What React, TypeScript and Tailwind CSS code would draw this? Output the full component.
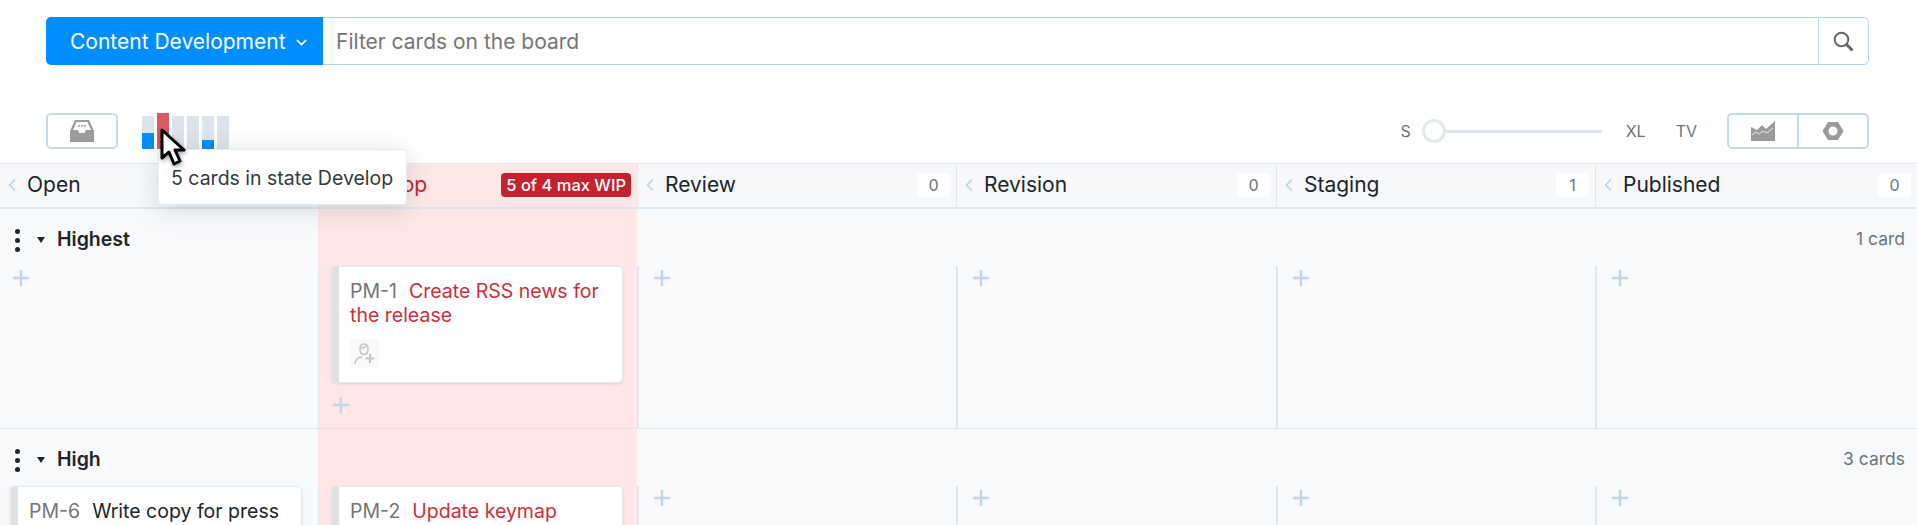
import type { ReactNode } from 'react';
import { ChevronDown, ChevronLeft, Plus } from 'lucide-react';

const columns = [
  { name: 'Open' },
  { name: 'Develop', wip: '5 of 4 max WIP' },
  { name: 'Review', count: 0 },
  { name: 'Revision', count: 0 },
  { name: 'Staging', count: 1 },
  { name: 'Published', count: 0 },
];

const bars = [
  { h: 'h-[33px]', fill: 'h-[16px]' },
  { h: 'h-[36px]', red: true },
  { h: 'h-[33px]' },
  { h: 'h-[33px]' },
  { h: 'h-[33px]', fill: 'h-[9px]' },
  { h: 'h-[33px]' },
];

const gridCols = 'grid grid-cols-[318px_319px_319px_320px_319px_322px]';

function InboxIcon() {
  return (
    <svg width="26" height="24" viewBox="0 0 26 24" fill="#9b9b9b">
      <path fillRule="evenodd" d="M6 1h14l5 11v11H1V12L6 1Zm1.5 2L4 11h5l1.5 3h5l1.5-3h5L18.500 3h-11Z" />
      <circle cx="10" cy="7" r="1" />
      <circle cx="13" cy="7" r="1" />
      <circle cx="16" cy="7" r="1" />
    </svg>
  );
}

function SearchIcon() {
  return (
    <svg width="21" height="21" viewBox="0 0 21 21" fill="none" stroke="#666666">
      <circle cx="8.500" cy="8.500" r="6.800" strokeWidth="2" />
      <path d="M13.500 13.500 19.500 19.500" strokeWidth="3" />
    </svg>
  );
}

function ChartIcon() {
  return (
    <svg width="24" height="20" viewBox="0 0 24 20" fill="#9b9b9b">
      <path d="M0 6l6 3 5-5 4 4 9-8v20H0z" />
      <path d="M1 14l4-3 3 2 4-3 4 2 6-5" fill="none" stroke="#fff" strokeWidth="0.8" />
    </svg>
  );
}

function NutIcon() {
  return (
    <svg width="22" height="20" viewBox="0 0 22 20" fill="#9b9b9b">
      <path fillRule="evenodd" d="M6 1h10l5.500 9L16 19H6L.5 10 6 1Zm5 4.500a4.500 4.500 0 1 0 0 9 4.500 4.500 0 0 0 0-9Z" />
    </svg>
  );
}

function AddUserIcon() {
  return (
    <svg width="22" height="24" viewBox="0 0 22 24" fill="none" stroke="#c4c4c4" strokeWidth="1.500">
      <path d="M6 7c0-3 1.500-5 4-5s4 2 4 5-1.500 5.500-4 5.500S6 10 6 7Z" />
      <path d="M6 6c2 0 5-.5 6-2" />
      <path d="M1 22c0-4 3-7 7-7" />
      <path d="M16 12v9M11.500 16.500h9" strokeWidth="2" />
    </svg>
  );
}

function Cursor() {
  return (
    <svg width="30" height="42" viewBox="0 0 30 42" className="drop-shadow-[1px_2px_2px_rgba(0,0,0,0.35)]">
      <path d="M3 3v28l7-6 5 12 6-3-5-11h9L3 3Z" fill="#fff" stroke="#000" strokeWidth="3" strokeLinejoin="round" />
    </svg>
  );
}

function Card({ id, title, red, assign }: { id: string; title: string; red?: boolean; assign?: boolean }) {
  return (
    <div className="w-[292px] rounded-[5px] border border-[#e3e8ee] border-l-[#e8e9eb] bg-white shadow-[0_1px_3px_rgba(60,80,110,0.15)]">
      <div className="border-l-[7px] border-[#e0e0e0] pl-[11px] pr-3 pt-[12px] pb-[14px] text-[19.500px] leading-[24px]">
        <span className="mr-[12px] text-[#757575]">{id}</span>
        <span className={red ? 'text-[#c8303c]' : 'text-[#212529]'}>{title}</span>
        {assign && (
          <div className="mt-[12px] flex h-[29px] w-[29px] items-center justify-center rounded-[4px] bg-[#f8f9fb]">
            <AddUserIcon />
          </div>
        )}
      </div>
    </div>
  );
}

function AddButton() {
  return <Plus className="ml-[-2px] h-[24px] w-[24px] text-[#c0d7ea]" strokeWidth={2.500} />;
}

function Lane({ title, count, height, open, develop }: { title: string; count: string; height: string; open?: ReactNode; develop?: ReactNode }) {
  return (
    <div className="border-b border-[#dfe6ee]">
      <div className={`${gridCols} h-[57px]`}>
        <div className="flex items-center pt-[5px]">
          <div className="ml-[15px] flex flex-col gap-[4px]">
            <span className="h-[5px] w-[5px] rounded-full bg-[#212529]" />
            <span className="h-[5px] w-[5px] rounded-full bg-[#212529]" />
            <span className="h-[5px] w-[5px] rounded-full bg-[#212529]" />
          </div>
          <span className="ml-[17px] h-0 w-0 border-x-[4px] border-t-[6px] border-x-transparent border-t-[#212529]" />
          <span className="ml-[12px] text-[19.500px] font-semibold text-[#212529]">{title}</span>
        </div>
        <div className="bg-[#fee7e6]" />
        <div className="col-span-4 flex items-center justify-end pt-[4px] pr-[12px] text-[17.500px] text-[#6c757d]">{count}</div>
      </div>
      <div className={`${gridCols} ${height}`}>
        <div className="pl-[10px]">
          {open ?? <div className="pl-[1px]"><AddButton /></div>}
        </div>
        <div className="border-l border-[#dfe6ee] bg-[#fee7e6] pl-[12px]">
          {develop}
          <div className="pt-[10px]"><AddButton /></div>
        </div>
        {[0, 1, 2, 3].map((i) => (
          <div key={i} className="border-l-2 border-[#dfe6ee] pl-[13px]">
            <AddButton />
          </div>
        ))}
      </div>
    </div>
  );
}

export default function App() {
  return (
    <div className="relative h-[525px] overflow-hidden bg-white font-['Inter',sans-serif] text-[#212529]">
      <div className="flex h-[65px] items-end pl-[46px] pr-[48px]">
        <div className="flex h-[48px] w-full">
          <button className="flex w-[277px] items-center gap-[7px] rounded-l-[5px] bg-[#008eff] pl-[24px] pt-[2px] text-[21px] text-white">
            Content Development
            <ChevronDown className="h-[17px] w-[17px]" />
          </button>
          <input
            placeholder="Filter cards on the board"
            className="min-w-0 flex-1 border-y border-[#b9d3e8] px-[13px] pt-[2px] text-[21px] outline-none placeholder:text-[#757575]"
          />
          <button className="flex w-[51px] items-center justify-center rounded-r-[5px] border border-[#b9d3e8]">
            <SearchIcon />
          </button>
        </div>
      </div>

      <div className="mt-[48px] flex h-[36px] items-center pl-[46px] pr-[48px]">
        <button className="flex h-[36px] w-[72px] items-center justify-center rounded-[5px] border-2 border-[#c5dbec]">
          <InboxIcon />
        </button>
        <div className="ml-[24px] flex h-[36px] items-end gap-[3px]">
          {bars.map((b, i) => (
            <div key={i} className={`flex w-[12px] flex-col justify-end ${b.h} ${b.red ? 'bg-[#dc5a64]' : 'bg-[#dde3ea]'}`}>
              {b.fill && <div className={`${b.fill} bg-[#008eff]`} />}
            </div>
          ))}
        </div>
        <div className="ml-auto flex items-center text-[16px] text-[#6c757d]">
          <span>S</span>
          <div className="ml-[11px] flex w-[180px] items-center">
            <span className="h-[24px] w-[24px] shrink-0 rounded-full border-[3px] border-[#e3e8ee] bg-white" />
            <span className="h-[3px] flex-1 bg-[#dfe5eb]" />
          </div>
          <span className="ml-[24px]">XL</span>
          <span className="ml-[30px]">TV</span>
        </div>
        <div className="ml-[30px] flex h-[36px] w-[142px] rounded-[5px] border-2 border-[#c5dbec]">
          <div className="flex flex-1 items-center justify-center border-r-2 border-[#c5dbec]">
            <ChartIcon />
          </div>
          <div className="flex flex-1 items-center justify-center">
            <NutIcon />
          </div>
        </div>
      </div>

      <div className={`${gridCols} mt-[14px] h-[46px] border-y border-[#dfe6ee] border-b-2 bg-[#f6f8fa]`}>
        {columns.map((c, i) => (
          <div
            key={c.name}
            className={`flex items-center pb-[1px] pl-[2px] pr-[6px] text-[21px] ${i > 0 ? 'border-l border-[#dfe6ee]' : ''} ${c.wip ? 'bg-[#fde8e8] text-[#c3232f]' : ''}`}
          >
            <ChevronLeft className="h-[20px] w-[20px] shrink-0 text-[#b7d2e8]" strokeWidth={2} />
            <span className="ml-[5px] flex-1">{c.name}</span>
            {c.wip && (
              <span className="flex h-[24px] items-center rounded-[4px] bg-[#c3232f] px-[5px] text-[16.500px] font-medium text-white">{c.wip}</span>
            )}
            {c.count !== undefined && (
              <span className="flex h-[24px] w-[33px] items-center justify-center rounded-[4px] bg-white text-[16px] text-[#6c757d]">{c.count}</span>
            )}
          </div>
        ))}
      </div>

      <div className="bg-[#f8f9fb]">
        <Lane
          title="Highest"
          count="1 card"
          height="h-[162px]"
          develop={<Card id="PM-1" title="Create RSS news for the release" red assign />}
        />
        <Lane
          title="High"
          count="3 cards"
          height="h-[162px]"
          open={<Card id="PM-6" title="Write copy for press release" />}
          develop={<Card id="PM-2" title="Update keymap" red />}
        />
      </div>

      <div className="absolute left-[158px] top-[149px] flex h-[56px] w-[249px] items-center rounded-[4px] border border-[#e8ebef] bg-white pl-[12px] pt-[3px] text-[19.500px] text-[#343a40] shadow-[0_4px_24px_rgba(50,70,90,0.18)]">
        5 cards in state Develop
      </div>
      <div className="absolute left-[159px] top-[127px]">
        <Cursor />
      </div>
    </div>
  );
}
